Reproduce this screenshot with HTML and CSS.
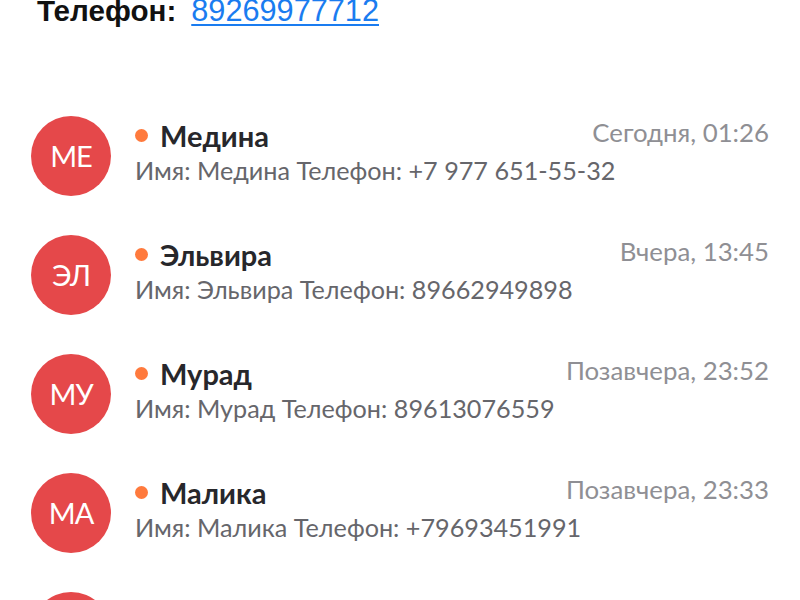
FILE: index.html
```html
<!DOCTYPE html>
<html lang="ru">
<head>
<meta charset="utf-8">
<link rel="stylesheet" href="styles.css">
</head>
<body>
<div class="header"><span class="label">Телефон:</span><a class="link" href="#">89269977712</a></div>
<ul class="list">
  <li class="row">
    <div class="avatar">МЕ</div>
    <div class="body">
      <div class="top"><span class="name"><span class="dot"></span>Медина</span><span class="time">Сегодня, 01:26</span></div>
      <div class="sub">Имя: Медина Телефон: +7 977 651-55-32</div>
    </div>
  </li>
  <li class="row">
    <div class="avatar">ЭЛ</div>
    <div class="body">
      <div class="top"><span class="name"><span class="dot"></span>Эльвира</span><span class="time">Вчера, 13:45</span></div>
      <div class="sub">Имя: Эльвира Телефон: 89662949898</div>
    </div>
  </li>
  <li class="row">
    <div class="avatar">МУ</div>
    <div class="body">
      <div class="top"><span class="name"><span class="dot"></span>Мурад</span><span class="time">Позавчера, 23:52</span></div>
      <div class="sub">Имя: Мурад Телефон: 89613076559</div>
    </div>
  </li>
  <li class="row">
    <div class="avatar">МА</div>
    <div class="body">
      <div class="top"><span class="name"><span class="dot"></span>Малика</span><span class="time">Позавчера, 23:33</span></div>
      <div class="sub">Имя: Малика Телефон: +79693451991</div>
    </div>
  </li>
  <li class="row">
    <div class="avatar"></div>
    <div class="body"></div>
  </li>
</ul>
</body>
</html>
```
FILE: styles.css
```css
html, body {
  margin: 0;
  padding: 0;
  background: #fff;
  overflow: hidden;
}
body {
  width: 800px;
  height: 600px;
}
.header {
  margin-top: -6px;
  padding-left: 37px;
  font-family: "Liberation Sans", Arial, sans-serif;
  line-height: 33px;
  white-space: nowrap;
  display: flex;
  align-items: baseline;
}
.label {
  font-size: 29.6px;
  font-weight: bold;
  color: #111;
  margin-right: 15px;
}
.link {
  font-size: 30.7px;
  color: #1a7cf0;
  text-decoration: underline;
  text-decoration-thickness: 2px;
  text-underline-offset: 3px;
}
.list {
  list-style: none;
  margin: 69px 0 0 0;
  padding: 0;
  font-family: Lato, "Noto Sans", sans-serif;
}
.row {
  height: 119px;
  display: flex;
  align-items: center;
  padding: 0 31px;
}
.avatar {
  width: 80px;
  height: 80px;
  flex: none;
  border-radius: 50%;
  background: #e5484a;
  color: #fff;
  font-size: 29px;
  letter-spacing: -1px;
  display: flex;
  align-items: center;
  justify-content: center;
}
.body {
  flex: 1;
  margin-left: 24px;
  min-width: 0;
  padding-bottom: 9px;
}
.top {
  display: flex;
  justify-content: space-between;
  align-items: baseline;
  line-height: 34px;
}
.name {
  font-size: 29px;
  font-weight: bold;
  color: #27272b;
  display: flex;
  align-items: center;
}
.dot {
  width: 13px;
  height: 13px;
  border-radius: 50%;
  background: #ff7a3d;
  margin-right: 12px;
  flex: none;
}
.time {
  font-size: 25.8px;
  color: #8f8f94;
}
.sub {
  font-size: 25.2px;
  line-height: 34px;
  color: #66666b;
  white-space: nowrap;
}
```
